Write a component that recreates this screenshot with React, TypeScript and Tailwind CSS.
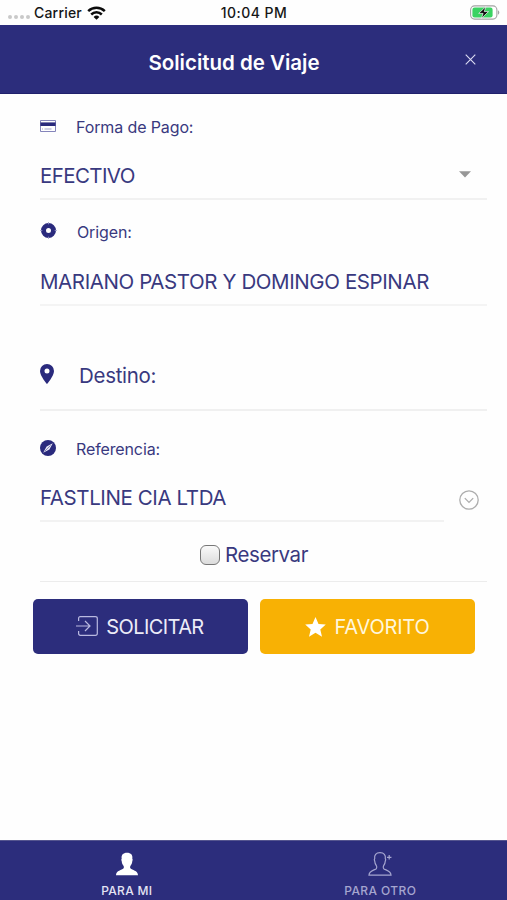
import type { ReactNode } from "react";

function StatusBar() {
  return (
    <div className="h-[25px] shrink-0 grid grid-cols-[1fr_auto_1fr] items-center pl-2 pr-[7px] text-[14px] leading-none font-medium text-[#161616]">
      <div className="flex items-center">
        <div className="flex gap-[2px] mt-[9px] mr-[4px]">
          <span className="size-[4px] rounded-full bg-[#c9c9c9]" />
          <span className="size-[4px] rounded-full bg-[#c9c9c9]" />
          <span className="size-[4px] rounded-full bg-[#c9c9c9]" />
          <span className="size-[4px] rounded-full bg-[#c9c9c9]" />
        </div>
        <span className="w-[48px] whitespace-nowrap tracking-[0.2px]">Carrier</span>
        <svg className="ml-[5px] w-[19px] h-[14px]" viewBox="0 0 19 14" fill="none" stroke="#0c0c0c" strokeWidth="2.5">
          <path d="M1.2 5.2a11.9 11.9 0 0 1 16.6 0" />
          <path d="M4.2 8.5a7.6 7.6 0 0 1 10.6 0" />
          <path d="M9.5 13.7 6.6 10.9a4.2 4.2 0 0 1 5.8 0z" fill="#0c0c0c" stroke="none" />
        </svg>
      </div>
      <span className="tracking-[0.45px]">10:04 PM</span>
      <svg className="justify-self-end w-[30px] h-[15px]" viewBox="0 0 30 15">
        <rect x="0.6" y="0.9" width="26.3" height="13.2" rx="4" fill="#fff" stroke="#a3a3a3" strokeWidth="1.1" />
        <rect x="2.4" y="2.6" width="20.2" height="9.8" rx="2.2" fill="#3bd362" />
        <path d="M28 5.3c1.8.7 1.8 3.7 0 4.4z" fill="#a3a3a3" />
        <path d="M15.9 1.6 8.7 8.4h4.4l-1.7 5L18.5 6.6h-4.2z" fill="#0b0b0b" stroke="#fff" strokeWidth="0.7" />
      </svg>
    </div>
  );
}

function Header() {
  return (
    <header className="h-[69px] shrink-0 bg-[#2c2d7c] border-b border-[#20216c] grid grid-cols-[1fr_auto_1fr] items-center px-[31px] text-white">
      <span />
      <h1 className="text-[20.5px] leading-6 font-semibold whitespace-nowrap mt-[8px] mr-[39px]">Solicitud de Viaje</h1>
      <button className="justify-self-end" aria-label="Cerrar">
        <svg className="size-[11px]" viewBox="0 0 11 11" stroke="#dcdcf3" strokeWidth="1.1">
          <path d="M.7.7l9.6 9.6M10.3.7L.7 10.3" />
        </svg>
      </button>
    </header>
  );
}

function Label({ icon, children }: { icon: ReactNode; children: ReactNode }) {
  return (
    <div className="flex items-center h-5 text-[16px] leading-5 tracking-[-0.12px]">
      <span className="w-9 shrink-0 -mt-[3px]">{icon}</span>
      <span className="whitespace-nowrap">{children}</span>
    </div>
  );
}

function CardIcon() {
  return (
    <svg className="w-4 h-3" viewBox="0 0 16 12">
      <rect x="0.4" y="0.4" width="15.2" height="11.2" rx="0.6" fill="#fff" stroke="#5556a0" strokeWidth="0.8" />
      <path d="M.4 2.4h15.2v3.6H.4z" fill="#2a2a7d" />
      <path d="M2 9h1M4.5 9h7" stroke="#8a8abf" strokeWidth="0.8" />
    </svg>
  );
}

function OriginIcon() {
  return (
    <svg className="size-[17px]" viewBox="0 0 17 17">
      <circle cx="8.5" cy="8.5" r="5" fill="none" stroke="#2a2a7d" strokeWidth="5" />
      <path d="M8.5 .3v2M8.5 14.7v2M.3 8.5h2M14.7 8.5h2" stroke="#8c8cc0" strokeWidth="1" />
    </svg>
  );
}

function PinIcon() {
  return (
    <svg className="w-[14px] h-5" viewBox="0 0 14 20">
      <path
        d="M7 0a7 7 0 0 0-7 7c0 5 7 13 7 13s7-8 7-13a7 7 0 0 0-7-7zm0 4.6a2.5 2.5 0 1 1 0 5 2.5 2.5 0 0 1 0-5z"
        fill="#2a2a7d"
      />
    </svg>
  );
}

function CompassIcon() {
  return (
    <svg className="size-4" viewBox="0 0 16 16">
      <circle cx="8" cy="8" r="8" fill="#2a2a7d" />
      <path d="M12.8 3.2 9.4 9.4 3.2 12.8 6.6 6.6z" fill="#e6e6f3" />
      <path d="M10.6 5.4 4.6 11.4" stroke="#2a2a7d" strokeWidth="0.5" />
    </svg>
  );
}

function TripForm() {
  return (
    <main className="flex-1 pl-10 pr-5 text-[#39397f] text-[20.5px] leading-6 tracking-[-0.4px]">
      <section className="h-[106px] border-b-2 border-[#f1f1f1] pt-[23px]">
        <Label icon={<CardIcon />}>Forma de Pago:</Label>
        <div className="flex items-center justify-between mt-[27px] pr-4">
          <span className="tracking-[-0.6px]">EFECTIVO</span>
          <svg className="w-3 h-[7px] -mt-1" viewBox="0 0 12 7">
            <path d="M0 .3h12L6 6.6z" fill="#979797" />
          </svg>
        </div>
      </section>

      <section className="h-[106px] border-b-2 border-[#f4f4f4] pt-[22px]">
        <Label icon={<OriginIcon />}>
          <span className="ml-px">Origen:</span>
        </Label>
        <p className="mt-[28px] whitespace-nowrap">MARIANO PASTOR Y DOMINGO ESPINAR</p>
      </section>

      <section className="h-[105px] border-b-2 border-[#f0f0f0] flex items-center pt-[37px]">
        <span className="w-[39px] -mt-1">
          <PinIcon />
        </span>
        <span className="tracking-[-0.3px]">Destino:</span>
      </section>

      <section className="h-[111px] pt-[28px] mr-[43px] border-b-2 border-[#f2f2f2]">
        <Label icon={<CompassIcon />}>Referencia:</Label>
        <div className="flex items-center justify-between mt-[27px] -mr-[35px]">
          <span className="whitespace-nowrap">FASTLINE CIA LTDA</span>
          <svg className="size-5 mt-1" viewBox="0 0 20 20" fill="none" stroke="#adadad" strokeWidth="1.3">
            <circle cx="10" cy="10" r="9.2" />
            <path d="M5.8 8.1 10 12.4l4.2-4.3" />
          </svg>
        </div>
      </section>

      <section className="h-[60px] border-b border-[#ececec] flex items-center justify-center gap-[5px] pt-[7px] pr-[19px]">
        <span className="size-5 -mt-px rounded-[6px] border-[1.5px] border-[#777] bg-gradient-to-b from-[#fafafa] to-[#dcdcdc]" />
        <span>Reservar</span>
      </section>

      <div className="grid grid-cols-2 gap-3 mt-[17px] -ml-[7px] mr-3 text-[20px] text-white">
        <button className="h-[55px] rounded-[5px] bg-[#2c2d7c] flex items-center justify-center gap-2 pr-px tracking-[-0.6px] text-[#ececf8]">
          <svg className="w-[22px] h-5 -mt-0.5" viewBox="0 0 22 20" fill="none" stroke="#b9b9e0" strokeWidth="1.2">
            <path d="M2.6 5V2.4C2.6 1.3 3.2.7 4.3.7h15c1.3 0 2 .6 2 1.8v15c0 1.2-.7 1.8-2 1.8h-15c-1.1 0-1.7-.6-1.7-1.7V15" />
            <path d="M0 10h14M9 5l5 5-5 5" />
          </svg>
          <span>SOLICITAR</span>
        </button>
        <button className="h-[55px] rounded-[5px] bg-[#f8b104] flex items-center justify-center gap-2 tracking-[-0.2px] text-[#fff7dc]">
          <svg className="w-[21px] h-5" viewBox="0 0 21 20" fill="#fff">
            <path d="M10.5 0l3 6.9 7.3.6-5.5 4.9 1.7 7.3-6.5-3.9-6.5 3.9 1.7-7.3L.2 7.5l7.300-.6z" />
          </svg>
          <span>FAVORITO</span>
        </button>
      </div>
    </main>
  );
}

const personPath =
  "M8 16.2C8.7 15.3 8.5 14.5 7.9 13.3 6.9 11.9 6.4 10.5 6.3 8.8 5.7 7.8 5.9 7 6.3 6.5 5.7 2.9 7.6.7 11.5.7s5.8 2.2 5.2 5.8c.4.5.6 1.3 0 2.3-.1 1.7-.6 3.1-1.6 4.5-.6 1.2-.8 2-.1 2.9 1.5 1.7 7 1.7 7.3 6.5H.7C1 17.9 6.5 17.9 8 16.2z";

function TabBar() {
  return (
    <nav className="h-[60px] shrink-0 grid grid-cols-2 bg-[#2c2d7c] border-t border-[#55558f] text-[12px] leading-4 font-medium">
      <a className="flex flex-col items-center pt-[11px] text-[#e4e4f3]">
        <svg className="w-6 h-6" viewBox="0 0 23 23.5" fill="#fff">
          <path d={personPath} />
        </svg>
        <span className="mt-[7px] tracking-[0.3px]">PARA MI</span>
      </a>
      <a className="flex flex-col items-center pt-[11px] text-[#a5a5cf]">
        <svg className="w-6 h-6 overflow-visible" viewBox="0 0 23 23.5" fill="none" stroke="#a5a5cf" strokeWidth="1.2">
          <path d={personPath} />
          <path d="M20.5 3v4.4M18.3 5.2h4.4" />
        </svg>
        <span className="mt-[7px] tracking-[0.4px]">PARA OTRO</span>
      </a>
    </nav>
  );
}

export default function App() {
  return (
    <div className="w-full h-screen flex flex-col overflow-hidden bg-[#fefefe] font-[Inter,'Liberation_Sans',sans-serif]">
      <StatusBar />
      <Header />
      <TripForm />
      <TabBar />
    </div>
  );
}
